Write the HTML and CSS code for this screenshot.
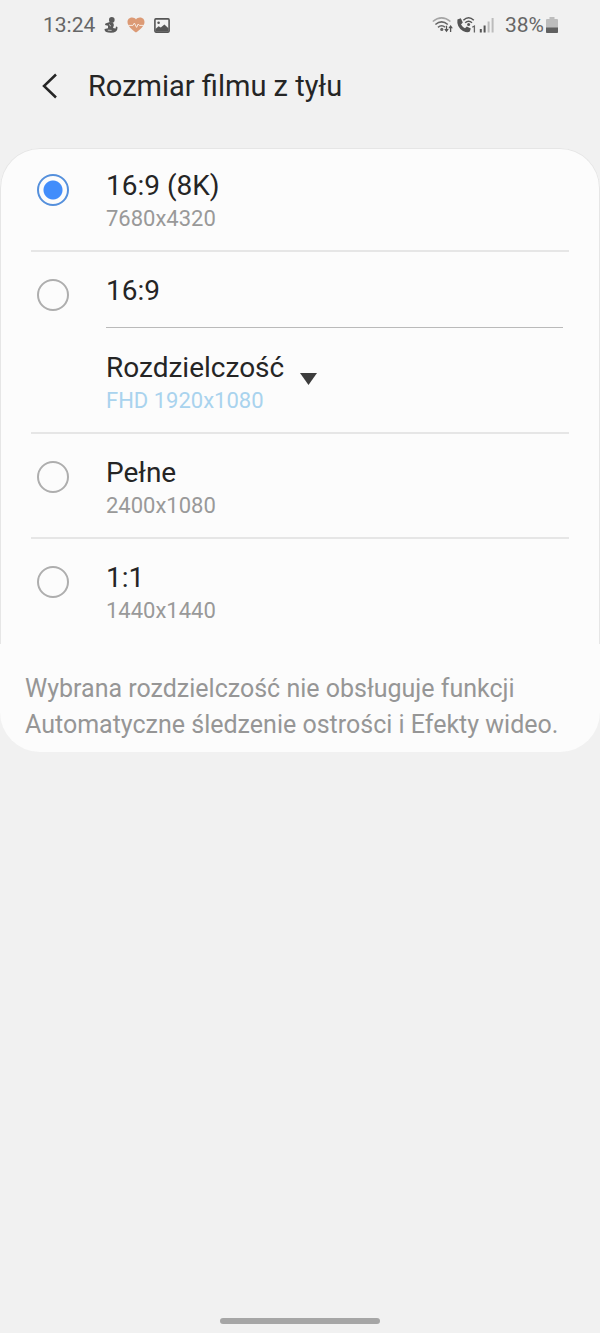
FILE: index.html
```html
<!DOCTYPE html>
<html lang="pl">
<head>
<meta charset="utf-8">
<meta name="viewport" content="width=device-width, initial-scale=1">
<title>Rozmiar filmu z tyłu</title>
<link rel="stylesheet" href="styles.css">
</head>
<body>
<div class="screen">
  <div class="status">
    <div class="status-group">
      <span class="clock">13:24</span>
      <svg class="icon-figure" viewBox="0 0 14 16" aria-hidden="true">
        <circle cx="7.8" cy="2.9" r="2.8" fill="#5a5a5a"/>
        <path d="M5.8 5 Q10.2 5 9.8 8.6 L9 11 L11.6 11.6 L12 9.6 L13.4 10 Q14.2 15.8 7 15.8 Q0 15.8 .6 12 L4 11.2 L4 8.8 L1 8 L1.4 6.4 Z" fill="#5a5a5a"/>
        <path d="M5 7.4 L7 9.2 M3.8 13.2 L7.6 13.4" fill="none" stroke="#f1f1f1" stroke-width=".7"/>
      </svg>
      <svg class="icon-heart" viewBox="0 0 18 16" aria-hidden="true">
        <path d="M9 15.6 C5 12.5 .5 9 .5 5 C.5 -.2 7 -.8 9 2.4 C11 -.8 17.5 -.2 17.5 5 C17.5 9 13 12.5 9 15.6 Z" fill="#dc9a75"/>
        <path d="M1 8.4 H6 L7.4 6 L9.6 10.4 L11.2 7 L12.4 8.4 H17" fill="none" stroke="#f8e9df" stroke-width="1"/>
      </svg>
      <svg class="icon-photo" viewBox="0 0 16 15" aria-hidden="true">
        <rect x=".9" y=".9" width="14.2" height="13.2" rx="1" fill="none" stroke="#555" stroke-width="1.6"/>
        <circle cx="4.6" cy="4.8" r="1.3" fill="#555"/>
        <path d="M1.5 13.5 V11 L4.6 8.2 L6.8 9.6 L10.4 6.6 L14.5 10.2 V13.5 Z" fill="#555"/>
      </svg>
    </div>
    <div class="status-group status-right">
      <svg class="icon-network" viewBox="0 0 63 18" aria-hidden="true">
        <g fill="none" stroke="#666" stroke-width="1.6">
          <path d="M.8 5.5 Q9.6 -1.8 18.4 5.5" stroke="#a5a5a5"/>
          <path d="M3.4 8.5 Q9.6 3.2 15.8 8.5"/>
          <path d="M6 11.4 Q9.6 8.2 13 11.2"/>
        </g>
        <circle cx="9.8" cy="13.4" r="1.6" fill="#666"/>
        <path d="M14.5 9.8 V14.6 M18.6 16 V11" stroke="#555" stroke-width="1.3"/>
        <path d="M12.2 13 H16.8 L14.5 16.2 Z M16.3 12.2 H20.9 L18.6 9 Z" fill="#555"/>
        <path d="M25.4 3.4 L28.8 2.2 L30.8 6.6 L29 8.4 Q30.4 10.8 33 12.2 L34.8 10.4 L38.8 12.4 L37.8 15.6 Q35.6 17.2 31 15 Q24.4 10.8 25.4 3.4 Z" fill="#555"/>
        <path d="M31.4 4.2 Q36.6 -.8 41.8 4.2 M33.2 6.8 Q36.6 3.6 40 6.8" fill="none" stroke="#555" stroke-width="1.5"/>
        <circle cx="36.6" cy="8.4" r="1.5" fill="#555"/>
        <path d="M40.2 11.2 L42.4 10 V16.4" fill="none" stroke="#666" stroke-width="1.3"/>
        <path d="M48.8 16.4 V13 M52.6 16.4 V9.5" stroke="#555" stroke-width="2"/>
        <path d="M56.6 16.4 V5.5 M60.6 16.4 V2" stroke="#bcbcbc" stroke-width="2"/>
      </svg>
      <span class="battery-level">38%</span>
      <svg class="icon-battery" viewBox="0 0 12 16" aria-hidden="true">
        <path d="M3.5 0 H8.5 V2 H11 Q12 2 12 3 V15 Q12 16 11 16 H1 Q0 16 0 15 V3 Q0 2 1 2 H3.5 Z" fill="#bdbdbd"/>
        <path d="M0 10.5 H12 V15 Q12 16 11 16 H1 Q0 16 0 15 Z" fill="#606060"/>
      </svg>
    </div>
  </div>

  <header class="header">
    <button class="back" type="button" aria-label="Wstecz">
      <svg viewBox="0 0 16 26" aria-hidden="true"><path d="M14 1.5 L2 13 L14 24.5" fill="none" stroke="#252525" stroke-width="2.5"/></svg>
    </button>
    <h1 class="heading">Rozmiar filmu z tyłu</h1>
  </header>

  <main class="card">
    <div class="options">
      <div class="option">
        <input class="radio" type="radio" name="size" id="size-8k" checked>
        <label class="text" for="size-8k"><span class="title">16:9 (8K)</span><span class="sub">7680x4320</span></label>
      </div>
      <div class="option">
        <input class="radio" type="radio" name="size" id="size-169">
        <div class="text">
          <label class="title title-ruled" for="size-169">16:9</label>
          <div class="resolution">
            <label class="title" for="resolution">Rozdzielczość</label>
            <select class="sub resolution-select" id="resolution"><option>FHD 1920x1080</option></select>
            <svg class="arrow" viewBox="0 0 17 12" aria-hidden="true"><path d="M0 0 H17 L8.5 12 Z" fill="#3c3c3c"/></svg>
          </div>
        </div>
      </div>
      <div class="option">
        <input class="radio" type="radio" name="size" id="size-full">
        <label class="text" for="size-full"><span class="title">Pełne</span><span class="sub">2400x1080</span></label>
      </div>
      <div class="option">
        <input class="radio" type="radio" name="size" id="size-11">
        <label class="text" for="size-11"><span class="title">1:1</span><span class="sub">1440x1440</span></label>
      </div>
    </div>
    <p class="note">Wybrana rozdzielczość nie obsługuje funkcji Automatyczne śledzenie ostrości i Efekty wideo.</p>
  </main>

  <div class="nav"><div class="nav-handle"></div></div>
</div>
</body>
</html>
```
FILE: styles.css
```css
* {
  box-sizing: border-box;
}

body {
  margin: 0;
  background: #f1f1f1;
  color: #252525;
  font-family: Roboto, "Noto Sans", sans-serif;
}

.screen {
  display: flex;
  flex-direction: column;
  min-height: 100vh;
}

.status {
  display: flex;
  justify-content: space-between;
  height: 50px;
  padding: 0 42px 0 43px;
  color: #666;
  font-size: 21px;
}

.status-group {
  display: flex;
  align-items: center;
  gap: 9px;
}

.status-right {
  gap: 2px;
}

.icon-figure {
  width: 14px;
  height: 16px;
}

.icon-heart {
  width: 18px;
  height: 16px;
}

.icon-photo {
  width: 16px;
  height: 15px;
}

.icon-network {
  width: 63px;
  height: 18px;
  margin-right: 8px;
}

.icon-battery {
  width: 12px;
  height: 16px;
}

.header {
  display: flex;
  align-items: center;
  gap: 30px;
  height: 71px;
  margin-bottom: 27px;
  padding: 0 42px;
}

.back {
  display: flex;
  padding: 0;
  border: 0;
  background: none;
}

.back svg {
  width: 16px;
  height: 26px;
}

.heading {
  margin: 0;
  font-size: 29px;
  font-weight: 400;
  line-height: 36px;
}

.card {
  border-radius: 40px;
  background: #fcfcfc;
}

.options {
  padding: 0 30px;
  border: 1px solid #e6e6e6;
  border-bottom: 0;
  border-radius: 40px 40px 0 0;
}

.option {
  display: flex;
  gap: 37px;
  padding: 21px 6px 16px;
  border-bottom: 2px solid #e6e6e6;
}

.option:first-child {
  padding-top: 19px;
}

.option:last-child {
  border-bottom-color: transparent;
}

.radio {
  flex: none;
  width: 32px;
  height: 32px;
  margin: 6px 0 0;
  border: 2px solid #aeaeae;
  border-radius: 50%;
  appearance: none;
}

.radio:checked {
  border-color: #5590dc;
  background: radial-gradient(circle, #428dfb 0 9px, transparent 10px);
}

.text {
  flex: 1;
}

.title {
  display: block;
  font-size: 28px;
  line-height: 36px;
}

.sub {
  display: block;
  color: #999;
  font-size: 22px;
  line-height: 30px;
}

.title-ruled {
  padding-bottom: 18px;
  border-bottom: 1px solid #bababa;
}

.resolution {
  display: grid;
  grid-template-columns: max-content 17px;
  column-gap: 16px;
  align-items: center;
  padding-top: 22px;
}

.resolution-select {
  grid-row: 2;
  height: 30px;
  padding: 0;
  border: 0;
  background: none;
  color: #a9d3ee;
  font-family: inherit;
  appearance: none;
}

.arrow {
  grid-row: 1 / 3;
  grid-column: 2;
  width: 17px;
  height: 12px;
  margin-bottom: 8px;
}

.note {
  margin: 0;
  padding: 27px 25px 9px;
  color: #969696;
  font-size: 25px;
  line-height: 36px;
}

.nav {
  display: flex;
  justify-content: center;
  margin-top: auto;
  padding-bottom: 9px;
}

.nav-handle {
  width: 160px;
  height: 6px;
  border-radius: 3px;
  background: #a6a6a6;
}
```
